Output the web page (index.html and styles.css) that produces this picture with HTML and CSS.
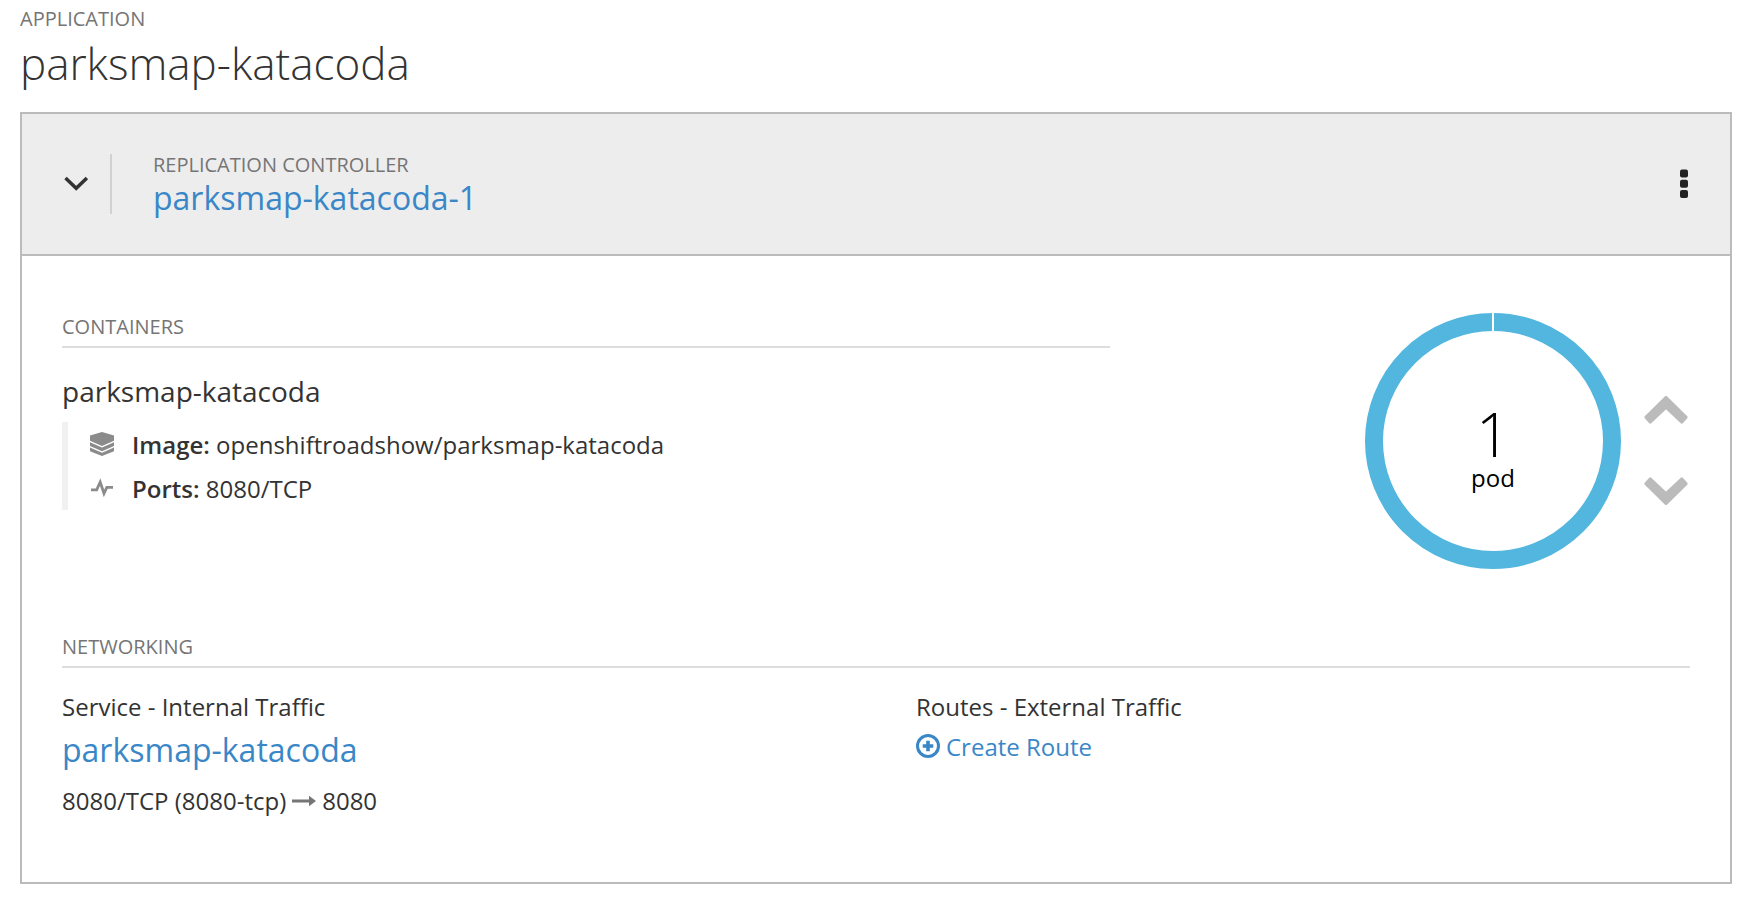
FILE: index.html
```html
<!DOCTYPE html>
<html lang="en">
<head>
<meta charset="utf-8">
<title>parksmap-katacoda</title>
<link rel="stylesheet" href="styles.css">
</head>
<body>
<main class="app">
  <div class="label">APPLICATION</div>
  <h1 class="app-title">parksmap-katacoda</h1>
  <section class="card">
    <header class="card-header">
      <div class="toggle">
        <svg width="26" height="16" viewBox="0 0 26 16"><path d="M2.500 1.900 13.200 12.200 23.900 1.900" fill="none" stroke="#333" stroke-width="3.500"/></svg>
      </div>
      <div class="controller">
        <div class="label">REPLICATION CONTROLLER</div>
        <a class="link controller-link">parksmap-katacoda-1</a>
      </div>
      <svg class="kebab" width="8" height="30" viewBox="0 0 8 30" fill="#222"><rect y=".5" width="8" height="8" rx="2"/><rect y="10.800" width="8" height="8" rx="2"/><rect y="21" width="8" height="8" rx="2"/></svg>
    </header>
    <div class="overview">
      <div class="containers">
        <div class="label section-label">CONTAINERS</div>
        <h2 class="container-name">parksmap-katacoda</h2>
        <ul class="details">
          <li class="detail">
            <svg class="detail-icon" width="24" height="24" viewBox="0 0 24 24" fill="#8b8b8b"><path d="M12 0 24 3.600V8.800L12 14 0 8.800V3.600z"/><path d="M0 10.300 12 15.600 24 10.300V14L12 19.200 0 14z"/><path d="M0 15.500 12 20.700 24 15.500V19.200L12 24 0 19.200z"/></svg>
            <span class="detail-text"><b>Image:</b> openshiftroadshow/parksmap-katacoda</span>
          </li>
          <li class="detail">
            <svg class="detail-icon" width="24" height="24" viewBox="0 0 24 24"><path d="M1 13.800H6.700L10.200 6 14 17.500 16.800 11.300H23" fill="none" stroke="#8b8b8b" stroke-width="2.800" stroke-miterlimit="3"/></svg>
            <span class="detail-text"><b>Ports:</b> 8080/TCP</span>
          </li>
        </ul>
      </div>
      <div class="pods">
        <div class="donut">
          <svg width="256" height="256" viewBox="0 0 256 256">
            <circle cx="128" cy="128" r="119" fill="none" stroke="#52b6df" stroke-width="18"/>
            <path d="M128 0V20" stroke="#fff" stroke-width="2"/>
          </svg>
          <div class="pod-summary">
            <div class="pod-count">1</div>
            <div class="pod-unit">pod</div>
          </div>
        </div>
        <div class="scale">
          <svg width="44" height="28" viewBox="0 0 44 28"><path d="M22 1.700 41.800 21.300 37.700 25.800 22 11 6.300 25.800 2.200 21.300z" fill="#bbb" stroke="#bbb" stroke-width="3.500" stroke-linejoin="round"/></svg>
          <svg width="44" height="28" viewBox="0 0 44 28"><path d="M22 26.300 41.800 6.700 37.700 2.200 22 17 6.300 2.200 2.200 6.700z" fill="#bbb" stroke="#bbb" stroke-width="3.500" stroke-linejoin="round"/></svg>
        </div>
      </div>
    </div>
    <div class="networking">
      <div class="label section-label">NETWORKING</div>
      <div class="network-columns">
        <div class="network-column">
          <div class="text">Service - Internal Traffic</div>
          <a class="link service-link">parksmap-katacoda</a>
          <div class="text ports">8080/TCP (8080-tcp) <svg class="arrow" width="24" height="12" viewBox="0 0 24 12" fill="#757575"><path d="M0 4.500H17V.800L24 6 17 11.200V7.500H0z"/></svg> 8080</div>
        </div>
        <div class="network-column">
          <div class="text">Routes - External Traffic</div>
          <a class="link create-route"><svg width="24" height="24" viewBox="0 0 24 24"><circle cx="12" cy="12" r="10.500" fill="none" stroke="#3a87c8" stroke-width="3"/><path d="M12 6.700V17.300M6.700 12H17.300" stroke="#3a87c8" stroke-width="3.600"/></svg>Create Route</a>
        </div>
      </div>
    </div>
  </section>
</main>
</body>
</html>
```
FILE: styles.css
```css
* { box-sizing: border-box; }
body {
  margin: 0;
  background: #fff;
  color: #333;
  font-family: "Open Sans", "Noto Sans", sans-serif;
  font-size: 24px;
}
svg { display: block; flex: none; }
h1, h2, ul { margin: 0; padding: 0; list-style: none; }
.app { padding: 7px 22px 0 20px; }
.label { color: #757575; font-size: 20px; line-height: 24px; }
.app-title { margin-top: 7px; font-size: 44px; font-weight: 300; line-height: 50px; }
.card {
  height: 772px;
  margin-top: 24px;
  border: 2px solid #bbb;
  box-shadow: 0 2px 0 #d9d9d9;
}
.card-header {
  display: flex;
  align-items: center;
  height: 142px;
  padding: 0 42px 0 40px;
  background: #ededed;
  border-bottom: 2px solid #bbb;
}
.toggle {
  display: flex;
  align-items: center;
  width: 50px;
  height: 60px;
  padding-left: 1px;
  border-right: 2px solid #d1d1d1;
}
.controller { margin-left: 41px; }
.link { color: #3a87c8; }
.controller-link { display: block; margin-top: 3px; font-size: 32px; line-height: 36px; }
.kebab { margin-left: auto; }
.overview { display: flex; justify-content: space-between; height: 320px; padding: 58px 40px 0; }
.containers { width: 1048px; }
.section-label { height: 34px; padding-top: 1px; border-bottom: 2px solid #ddd; }
.container-name { margin-top: 28px; font-size: 28px; font-weight: 400; line-height: 30px; }
.details { margin-top: 16px; padding-left: 22px; border-left: 6px solid #f1f1f1; }
.detail { display: flex; height: 44px; line-height: 44px; }
.detail-icon { margin: 10px 18px 0 0; }
.detail-text { padding-top: 1px; }
b { font-weight: 600; }
.pods { display: flex; margin-top: -1px; gap: 23px; padding-right: 2px; }
.donut { display: grid; width: 256px; height: 256px; }
.donut > * { grid-area: 1 / 1; }
.pod-summary { padding-top: 98px; color: #000; text-align: center; }
.pod-count { font-size: 60px; font-weight: 300; line-height: 46px; }
.pod-unit { margin-top: 5px; font-size: 24px; line-height: 32px; }
.scale { display: flex; flex-direction: column; gap: 53px; padding-top: 83px; }
.networking { padding: 58px 40px 0; }
.network-columns { display: grid; grid-template-columns: 854px 1fr; margin-top: 23px; }
.text { line-height: 32px; }
.service-link { display: block; margin-top: 9px; font-size: 32px; line-height: 36px; }
.ports { display: flex; align-items: center; gap: 6px; margin-top: 17px; }
.create-route { display: flex; gap: 6px; margin-top: 8px; line-height: 32px; }
.create-route svg { margin-top: 3px; }
```
